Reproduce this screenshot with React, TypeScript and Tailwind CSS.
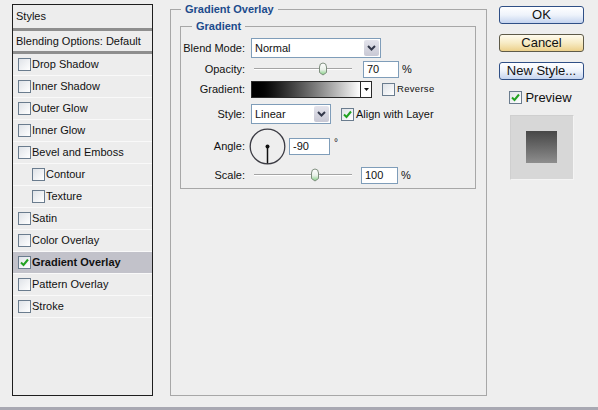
import React from "react";

const styleItems = [
  { label: "Drop Shadow" },
  { label: "Inner Shadow" },
  { label: "Outer Glow" },
  { label: "Inner Glow" },
  { label: "Bevel and Emboss" },
  { label: "Contour", indent: true },
  { label: "Texture", indent: true },
  { label: "Satin" },
  { label: "Color Overlay" },
  { label: "Gradient Overlay", active: true },
  { label: "Pattern Overlay" },
  { label: "Stroke" },
];

function Checkbox({ checked = false }: { checked?: boolean }) {
  return (
    <span className="flex h-[13px] w-[13px] shrink-0 items-center justify-center border border-[#6a7c8e] bg-gradient-to-br from-[#dfe3e8] to-white">
      {checked && (
        <svg width="9" height="9" viewBox="0 0 9 9">
          <path d="M1 4.5 L3.5 7 L8 1.5" fill="none" stroke="#21a221" strokeWidth="2" />
        </svg>
      )}
    </span>
  );
}

function Chevron() {
  return (
    <svg width="9" height="6" viewBox="0 0 9 6">
      <path d="M1 1 L4.5 4.5 L8 1" fill="none" stroke="#33384a" strokeWidth="2" />
    </svg>
  );
}

function Select({ value, width }: { value: string; width: string }) {
  return (
    <div className={`flex h-[20px] ${width} items-stretch border border-[#7f9db9] bg-white`}>
      <span className="flex flex-1 items-center pl-[3px]">{value}</span>
      <span className="m-[1px] flex w-[15px] items-center justify-center rounded-[2px] bg-gradient-to-b from-[#e4e4ec] to-[#c8c8d4]">
        <Chevron />
      </span>
    </div>
  );
}

function Slider({ value, max }: { value: number; max: number }) {
  const pct = value / max;
  return (
    <div className="relative h-[14px] w-[101px]">
      <div className="absolute left-[3px] right-0 top-[6px] h-[2px] border-t border-[#a4a4a4] border-b border-b-white" />
      <svg
        className="absolute top-0"
        style={{ left: `${3 + pct * 91}px` }}
        width="10"
        height="14"
        viewBox="0 0 10 14"
      >
        <defs>
          <linearGradient id="thumb" x1="0" y1="0" x2="0" y2="1">
            <stop offset="0" stopColor="#ffffff" />
            <stop offset="0.55" stopColor="#e8f0e8" />
            <stop offset="1" stopColor="#7fcf7f" />
          </linearGradient>
        </defs>
        <path d="M1.5 5 Q1.5 1 5 1 Q8.5 1 8.5 5 V10.5 L5 13 L1.5 10.5 Z" fill="url(#thumb)" stroke="#7f8f7f" />
      </svg>
    </div>
  );
}

function Field({ value, width = "w-[36px]" }: { value: string; width?: string }) {
  return (
    <div className={`flex h-[17px] ${width} items-center border border-[#7f9db9] bg-white pl-[3px]`}>{value}</div>
  );
}

function Row({ label, className = "", children }: { label: string; className?: string; children: React.ReactNode }) {
  return (
    <div className={`flex items-center ${className}`}>
      <span className="w-[63px] shrink-0 text-right">{label}</span>
      <div className="ml-[6px] flex items-center">{children}</div>
    </div>
  );
}

function Button({ label, variant = "blue" }: { label: string; variant?: "blue" | "focus" }) {
  const look =
    variant === "focus"
      ? "border-[#5e5a48] bg-gradient-to-b from-[#fffbee] via-[#f7ebc4] to-[#ecd08a]"
      : "border-[#2f4f86] bg-gradient-to-b from-white via-[#eef3fb] to-[#c5d4ef]";
  return (
    <div className={`flex h-[18px] w-[85px] items-center justify-center rounded-[3px] border text-[13px] text-[#111] ${look}`}>
      {label}
    </div>
  );
}

export default function App() {
  return (
    <div className="flex h-[410px] w-[598px] flex-col bg-[#eeeeee] font-['Liberation_Sans',Arial,sans-serif] text-[11px] text-[#111]">
      <div className="flex flex-1 pl-[12px] pt-[4px]">
        {/* Styles list */}
        <div className="flex h-[392px] w-[141px] shrink-0 flex-col border border-[#1e1e1e] bg-[#ededed]">
          <div className="flex h-[23px] items-center pl-[3px]">Styles</div>
          <div className="h-[3px] bg-[#8e8e8e]" />
          <div className="flex h-[20px] items-center pl-[3px]">Blending Options: Default</div>
          <div className="h-[3px] bg-[#8e8e8e]" />
          {styleItems.map((it) => (
            <div
              key={it.label}
              className={`flex h-[22px] items-center gap-[1px] border-b border-[#f9f9f9] ${it.indent ? "pl-[19px]" : "pl-[5px]"} ${
                it.active ? "bg-[#c2c2ca] font-bold" : ""
              }`}
            >
              <Checkbox checked={it.active} />
              <span>{it.label}</span>
            </div>
          ))}
        </div>

        {/* Gradient Overlay group */}
        <fieldset className="ml-[17px] -mt-[1px] h-[393px] w-[317px] shrink-0 border border-[#a7a7a7]">
          <legend className="ml-[10px] px-[4px] text-[11px] font-bold leading-[12px] text-[#1c4b8c]">Gradient Overlay</legend>
          <fieldset className="ml-[9px] mt-[5px] h-[169px] w-[296px] border border-[#a7a7a7] pl-[1px]">
            <legend className="ml-[10px] px-[4px] text-[11px] font-bold leading-[12px] text-[#1c4b8c]">Gradient</legend>
            <Row label="Blend Mode:" className="mt-[6px] h-[20px]">
              <Select value="Normal" width="w-[130px]" />
            </Row>
            <Row label="Opacity:" className="mt-[3px] h-[16px]">
              <Slider value={70} max={100} />
              <div className="ml-[11px]">
                <Field value="70" />
              </div>
              <span className="ml-[3px]">%</span>
            </Row>
            <Row label="Gradient:" className="mt-[4px] h-[17px]">
              <div className="flex h-[17px] w-[121px] border border-[#2a2a2a]">
                <div className="flex-1 bg-gradient-to-r from-black to-white" />
                <div className="flex w-[11px] items-center justify-center border-l border-[#2a2a2a] bg-white">
                  <svg width="5" height="3" viewBox="0 0 5 3">
                    <path d="M0 0 H5 L2.5 3 Z" fill="#111" />
                  </svg>
                </div>
              </div>
              <div className="ml-[10px] flex items-center gap-[2px]">
                <Checkbox />
                <span className="text-[9.5px] tracking-[0.3px]">Reverse</span>
              </div>
            </Row>
            <Row label="Style:" className="mt-[6px] h-[20px]">
              <Select value="Linear" width="w-[80px]" />
              <div className="ml-[10px] flex items-center gap-[2px]">
                <Checkbox checked />
                <span>Align with Layer</span>
              </div>
            </Row>
            <Row label="Angle:" className="mt-[4px] h-[36px]">
              <svg width="37" height="37" viewBox="0 0 37 37" className="-ml-[2px]">
                <circle cx="18.5" cy="18.5" r="17.3" fill="none" stroke="#3c3c44" strokeWidth="1.3" />
                <line x1="18.5" y1="18.5" x2="18.5" y2="35.5" stroke="#111" strokeWidth="1.5" />
                <circle cx="18.5" cy="18.5" r="2" fill="#111" />
              </svg>
              <div className="ml-[3px]">
                <Field value="-90" width="w-[41px]" />
              </div>
              <span className="ml-[4px] -mt-[8px] text-[10px]">°</span>
            </Row>
            <Row label="Scale:" className="mt-[2px] h-[18px]">
              <Slider value={61} max={100} />
              <div className="ml-[9px]">
                <Field value="100" width="w-[37px]" />
              </div>
              <span className="ml-[3px]">%</span>
            </Row>
          </fieldset>
        </fieldset>

        {/* Buttons and preview */}
        <div className="ml-[12px] flex w-[85px] shrink-0 flex-col items-center pt-[2px]">
          <Button label="OK" />
          <div className="mt-[10px]">
            <Button label="Cancel" variant="focus" />
          </div>
          <div className="mt-[10px]">
            <Button label="New Style..." />
          </div>
          <div className="mt-[8px] flex items-center gap-[3px] pr-[2px] text-[13px]">
            <Checkbox checked />
            <span>Preview</span>
          </div>
          <div className="mt-[7px] flex h-[65px] w-[64px] items-center justify-center border border-[#f4f4f4] border-l-[#cfcfcf] border-t-[#cfcfcf] bg-[#d7d7d7] pr-[1px]">
            <div className="h-[32px] w-[31px] bg-gradient-to-b from-[#474747] to-[#8e8e8e]" />
          </div>
        </div>
      </div>
      <div className="h-[3px] bg-[#a8a8b2]" />
    </div>
  );
}
